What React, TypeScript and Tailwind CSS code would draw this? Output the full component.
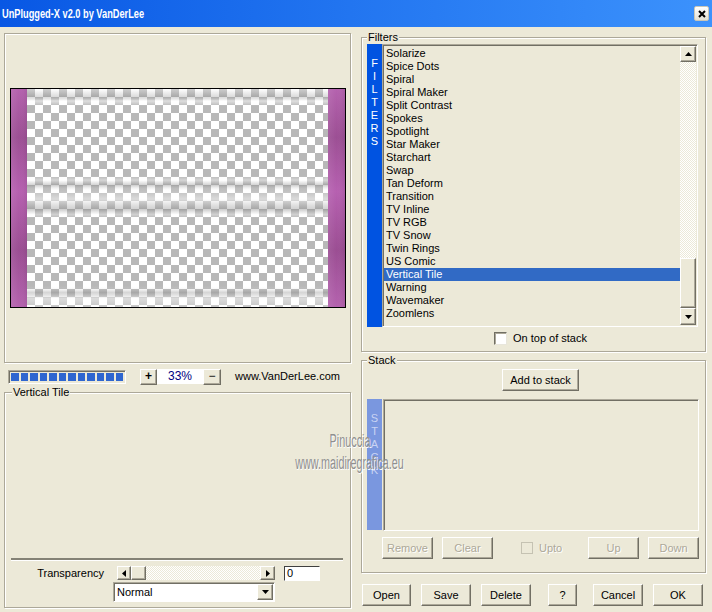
import React from "react";

const FILTERS = [
  "Solarize",
  "Spice Dots",
  "Spiral",
  "Spiral Maker",
  "Split Contrast",
  "Spokes",
  "Spotlight",
  "Star Maker",
  "Starchart",
  "Swap",
  "Tan Deform",
  "Transition",
  "TV Inline",
  "TV RGB",
  "TV Snow",
  "Twin Rings",
  "US Comic",
  "Vertical Tile",
  "Warning",
  "Wavemaker",
  "Zoomlens",
];

const raised =
  "bg-[#ece9d8] border border-t-white border-l-white border-r-[#716f64] border-b-[#716f64] shadow-[inset_-1px_-1px_0_#aca899]";
const sunken =
  "border border-t-[#aca899] border-l-[#aca899] border-r-white border-b-white shadow-[inset_1px_1px_0_#716f64]";
const etched = "border border-[#aca899] shadow-[inset_1px_1px_0_#fff,1px_1px_0_#fff]";
const disabled = "text-[#aca899] [text-shadow:1px_1px_0_#fff]";

function Tri({ dir }: { dir: "up" | "down" | "left" | "right" }) {
  if (dir === "up")
    return (
      <svg width="7" height="4">
        <polygon points="3.5,0 7,4 0,4" fill="#000" />
      </svg>
    );
  if (dir === "down")
    return (
      <svg width="7" height="4">
        <polygon points="0,0 7,0 3.5,4" fill="#000" />
      </svg>
    );
  if (dir === "left")
    return (
      <svg width="4" height="7">
        <polygon points="4,0 4,7 0,3.5" fill="#000" />
      </svg>
    );
  return (
    <svg width="4" height="7">
      <polygon points="0,0 0,7 4,3.5" fill="#000" />
    </svg>
  );
}

function Group({
  label,
  className,
  labelClass,
  children,
}: {
  label: string;
  className: string;
  labelClass: string;
  children?: React.ReactNode;
}) {
  return (
    <div className={`relative ${etched} ${className}`}>
      <span className={`absolute -top-[7px] px-px bg-[#ece9d8] leading-[13px] ${labelClass}`}>
        {label}
      </span>
      {children}
    </div>
  );
}

function Btn({
  children,
  className,
  off,
}: {
  children: React.ReactNode;
  className: string;
  off?: boolean;
}) {
  return (
    <div
      className={`${raised} h-[22px] flex items-center justify-center ${off ? disabled : ""} ${className}`}
    >
      {children}
    </div>
  );
}

function Preview() {
  return (
    <svg width="336" height="220" className="block">
      <defs>
        <pattern id="chk" width="16" height="16" patternUnits="userSpaceOnUse" x="17" y="1">
          <rect width="16" height="16" fill="#fff" />
          <rect width="8" height="8" fill="#b8b8b8" />
          <rect x="8" y="8" width="8" height="8" fill="#b8b8b8" />
        </pattern>
        <linearGradient id="purp" x1="0" y1="0" x2="0" y2="1">
          <stop offset="0" stopColor="#b462ae" />
          <stop offset="0.22" stopColor="#9c4f94" />
          <stop offset="0.47" stopColor="#b660b0" />
          <stop offset="0.74" stopColor="#9b4e93" />
          <stop offset="1" stopColor="#b462ae" />
        </linearGradient>
        <linearGradient id="purpH" x1="0" y1="0" x2="1" y2="0">
          <stop offset="0" stopColor="#fff" stopOpacity="0.08" />
          <stop offset="0.5" stopColor="#fff" stopOpacity="0" />
          <stop offset="1" stopColor="#000" stopOpacity="0.06" />
        </linearGradient>
        <linearGradient id="bandTop" x1="0" y1="0" x2="0" y2="1">
          <stop offset="0" stopColor="#fff" stopOpacity="0.3" />
          <stop offset="0.45" stopColor="#8a8a8a" stopOpacity="0.3" />
          <stop offset="0.7" stopColor="#fff" stopOpacity="0.55" />
          <stop offset="1" stopColor="#fff" stopOpacity="0" />
        </linearGradient>
        <linearGradient id="bandMid" x1="0" y1="0" x2="0" y2="1">
          <stop offset="0" stopColor="#fff" stopOpacity="0" />
          <stop offset="0.1" stopColor="#fff" stopOpacity="0.4" />
          <stop offset="0.22" stopColor="#888" stopOpacity="0.4" />
          <stop offset="0.35" stopColor="#fff" stopOpacity="0.1" />
          <stop offset="0.55" stopColor="#fff" stopOpacity="0.5" />
          <stop offset="0.8" stopColor="#888" stopOpacity="0.4" />
          <stop offset="0.92" stopColor="#fff" stopOpacity="0.35" />
          <stop offset="1" stopColor="#fff" stopOpacity="0" />
        </linearGradient>
        <linearGradient id="bandBot" x1="0" y1="0" x2="0" y2="1">
          <stop offset="0" stopColor="#fff" stopOpacity="0" />
          <stop offset="0.3" stopColor="#888" stopOpacity="0.35" />
          <stop offset="0.6" stopColor="#fff" stopOpacity="0.5" />
          <stop offset="1" stopColor="#fff" stopOpacity="0.2" />
        </linearGradient>
      </defs>
      <rect width="336" height="220" fill="#000" />
      <rect x="1" y="1" width="334" height="218" fill="url(#chk)" />
      <rect x="17" y="1" width="301" height="17" fill="url(#bandTop)" />
      <rect x="17" y="88" width="301" height="42" fill="url(#bandMid)" />
      <rect x="17" y="198" width="301" height="21" fill="url(#bandBot)" />
      <rect x="1" y="1" width="16" height="218" fill="url(#purp)" />
      <rect x="1" y="1" width="16" height="218" fill="url(#purpH)" />
      <rect x="318" y="1" width="17" height="218" fill="url(#purp)" />
      <rect x="318" y="1" width="17" height="218" fill="url(#purpH)" />
    </svg>
  );
}

export default function App() {
  return (
    <div className="w-[712px] h-[612px] bg-[#ece9d8] overflow-hidden relative text-[11px] leading-[13px] text-black font-['Liberation_Sans',Arial,sans-serif]">
      {/* title bar */}
      <div className="h-[27px] flex items-center justify-between bg-linear-to-r from-[#0857e4] to-[#3c92fc] pl-[2px] pr-[3px]">
        <span className="inline-block origin-left scale-x-[0.71] text-white font-bold text-[13px] whitespace-nowrap">
          UnPlugged-X v2.0 by VanDerLee
        </span>
        <div className="w-[15px] h-[15px] rounded-[2px] bg-linear-to-b from-white to-[#e4e1d3] border border-[#c9c6b7] flex items-center justify-center">
          <svg width="8" height="8">
            <path d="M1 1L7 7M7 1L1 7" stroke="#000" strokeWidth="2" />
          </svg>
        </div>
      </div>

      <div className="flex pl-[4px]">
        {/* left column */}
        <div className="w-[347px] flex flex-col">
          <div className={`mt-[6px] h-[330px] ${etched} flex items-center justify-center`}>
            <Preview />
          </div>

          <div className="mt-[6px] h-[15px] flex items-center">
            <div className={`ml-[4px] w-[118px] h-[14px] ${sunken} flex gap-[2px] p-[2px]`}>
              {Array.from({ length: 12 }).map((_, i) => (
                <div key={i} className="w-[8px] h-full bg-[#2f66d0]" />
              ))}
            </div>
            <div className={`${raised} ml-[14px] w-[17px] h-[16px] flex items-center justify-center font-bold text-[12px]`}>
              +
            </div>
            <div className="w-[46px] h-[15px] bg-white text-[#000080] text-[12px] flex items-center justify-center">
              33%
            </div>
            <div className={`${raised} w-[18px] h-[16px] flex items-center justify-center text-[12px]`}>
              −
            </div>
            <span className="ml-[14px]">www.VanDerLee.com</span>
          </div>

          <Group
            label="Vertical Tile"
            labelClass="left-[7px]"
            className="mt-[8px] h-[216px] flex flex-col justify-end pb-[5px]"
          >
            <div className="ml-[6px] mr-[7px] h-[3px] bg-[#848276] border-b border-white" />
            <div className="mt-[5px] h-[14px] flex items-center">
              <div className="w-[112px] text-right pr-[13px]">Transparency</div>
              <div className="w-[158px] h-[14px] flex">
                <div className={`${raised} w-[14px] h-full flex items-center justify-center`}>
                  <Tri dir="left" />
                </div>
                <div className={`${raised} w-[15px] h-full`} />
                <div className="flex-1 h-full bg-[image:repeating-conic-gradient(#fff_0_25%,#ece9d8_0_50%)] bg-[length:2px_2px]" />
                <div className={`${raised} w-[15px] h-full flex items-center justify-center`}>
                  <Tri dir="right" />
                </div>
              </div>
              <div className="ml-[9px] w-[36px] h-[15px] bg-white border border-t-[#404040] border-l-[#404040] border-r-white border-b-white flex items-center pl-[2px]">
                0
              </div>
            </div>
            <div className={`mt-[2px] ml-[108px] w-[162px] h-[20px] bg-white ${sunken} flex items-center justify-between p-px`}>
              <span className="pl-[2px]">Normal</span>
              <div className={`${raised} w-[16px] h-[16px] flex items-center justify-center`}>
                <Tri dir="down" />
              </div>
            </div>
          </Group>
        </div>

        {/* right column */}
        <div className="ml-[10px] w-[345px] flex flex-col">
          <Group label="Filters" labelClass="left-[5px]" className="mt-[10px] h-[315px]">
            <div className="ml-[5px] mt-[6px] flex h-[283px]">
              <div className="w-[15px] bg-[#0053e1] flex flex-col items-center pt-[13px] text-white">
                {"FILTERS".split("").map((c, i) => (
                  <span key={i}>{c}</span>
                ))}
              </div>
              <div className={`w-[316px] ${sunken} p-px flex`}>
                <div className="flex-1 pt-px">
                  {FILTERS.map((f) => (
                    <div
                      key={f}
                      className={`h-[13px] pl-[2px] ${f === "Vertical Tile" ? "bg-[#316ac5] text-white" : ""}`}
                    >
                      {f}
                    </div>
                  ))}
                </div>
                <div className="w-[16px] flex flex-col">
                  <div className={`${raised} h-[16px] flex items-center justify-center`}>
                    <Tri dir="up" />
                  </div>
                  <div className="flex-1 bg-[image:repeating-conic-gradient(#fff_0_25%,#ece9d8_0_50%)] bg-[length:2px_2px]" />
                  <div className={`${raised} h-[50px]`} />
                  <div className={`${raised} h-[17px] flex items-center justify-center`}>
                    <Tri dir="down" />
                  </div>
                </div>
              </div>
            </div>
            <div className="mt-[5px] ml-[132px] h-[13px] flex items-center">
              <div className="w-[13px] h-[13px] bg-white border border-t-[#716f64] border-l-[#716f64] border-r-[#e8e6dc] border-b-[#e8e6dc] shadow-[inset_1px_1px_0_#aca899]" />
              <span className="ml-[6px]">On top of stack</span>
            </div>
          </Group>

          <Group label="Stack" labelClass="left-[5px]" className="mt-[8px] h-[213px]">
            <Btn className="mt-[8px] ml-[140px] w-[77px]">Add to stack</Btn>
            <div className="ml-[5px] mt-[8px] flex h-[132px]">
              <div className="w-[15px] h-[131px] bg-[#7a97df] flex flex-col items-center pt-[13px] text-[#c9d3f3]">
                {"STACK".split("").map((c, i) => (
                  <span key={i}>{c}</span>
                ))}
              </div>
              <div className={`ml-px w-[316px] ${sunken}`} />
            </div>
            <div className="mt-[6px] h-[22px] flex">
              <Btn off className="ml-[20px] w-[51px]">Remove</Btn>
              <Btn off className="ml-[9px] w-[51px]">Clear</Btn>
              <div className="w-[95px] flex items-center pl-[28px]">
                <div className="w-[12px] h-[12px] border border-[#c5c2b2] bg-[#ece9d8]" />
                <span className={`ml-[6px] ${disabled}`}>Upto</span>
              </div>
              <Btn off className="w-[51px]">Up</Btn>
              <Btn off className="ml-[9px] w-[51px]">Down</Btn>
            </div>
          </Group>

          <div className="mt-[11px] h-[22px] flex">
            <Btn className="ml-px w-[49px]">Open</Btn>
            <Btn className="ml-[10px] w-[50px]">Save</Btn>
            <Btn className="ml-[10px] w-[50px]">Delete</Btn>
            <Btn className="ml-[17px] w-[29px]">?</Btn>
            <Btn className="ml-[16px] w-[50px]">Cancel</Btn>
            <Btn className="ml-[10px] w-[50px]">OK</Btn>
          </div>
        </div>
      </div>

      {/* watermark */}
      <div className="absolute left-[290px] top-[430px] w-[120px] flex flex-col items-center pointer-events-none text-[#8f8f8f] text-[18px] leading-[22px] [text-shadow:1px_1px_0_#fff]">
        <span className="inline-block scale-x-[0.6]">Pinuccia</span>
        <span className="inline-block scale-x-[0.6] whitespace-nowrap">www.maidiregrafica.eu</span>
      </div>
    </div>
  );
}
